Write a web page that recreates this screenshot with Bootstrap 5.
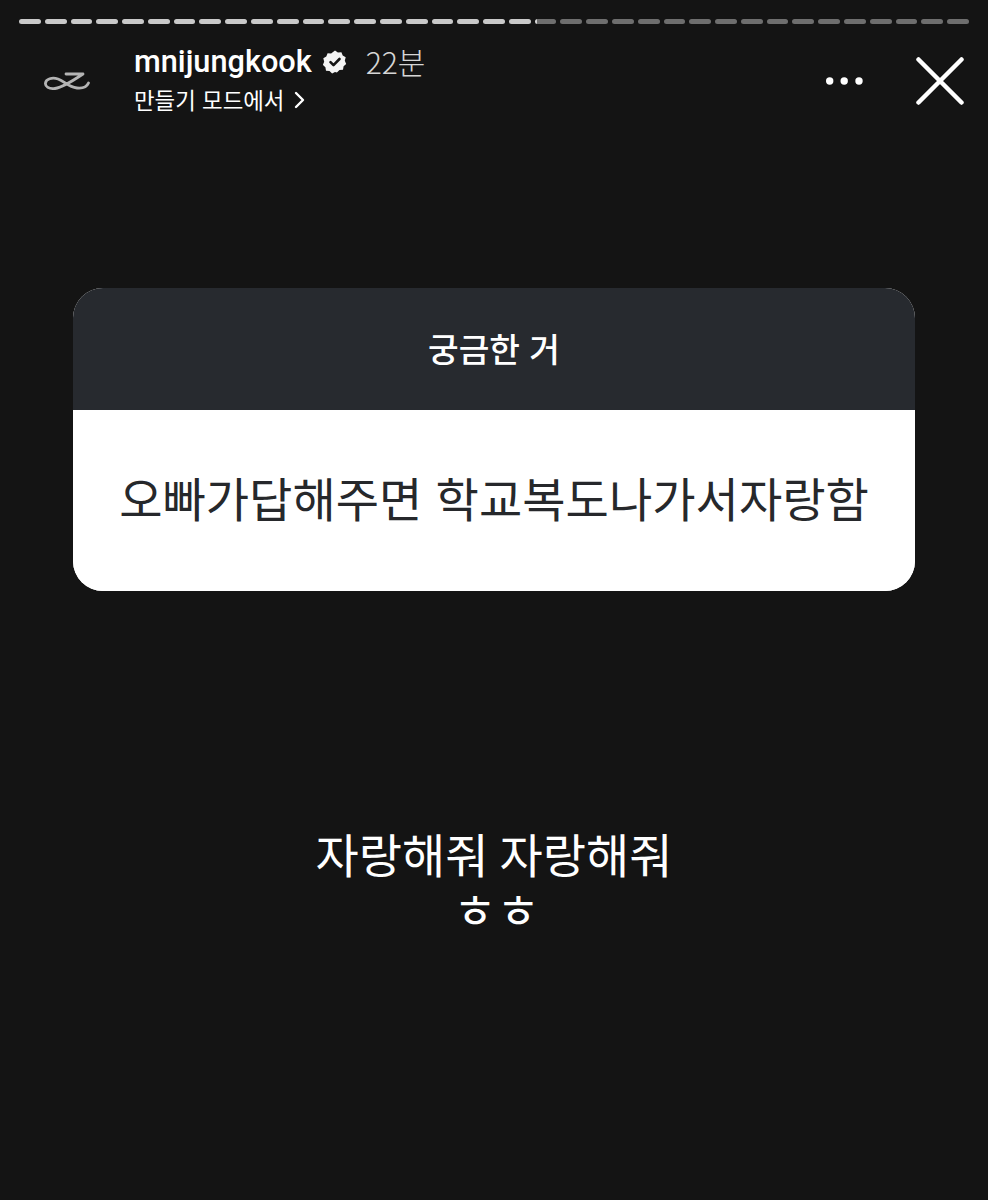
<!DOCTYPE html>
<html lang="ko">
<head>
    <meta charset="UTF-8">
    <meta name="viewport" content="width=device-width, initial-scale=1.0">
    <title>mnijungkook</title>
    <link href="https://cdn.jsdelivr.net/npm/bootstrap@5.3.0/dist/css/bootstrap.min.css" rel="stylesheet">
    <style>
        body {
            background-color: #141414;
            font-family: "Noto Sans CJK KR", "Noto Sans", sans-serif;
            color: #fff;
            min-height: 1200px;
        }
        .story-progress {
            padding: 19px 19px 0;
            gap: 4px;
        }
        .seg {
            flex: 1 1 0;
            height: 5px;
            border-radius: 3px;
            background-color: #6e6e6e;
        }
        .seg-done { background-color: #c9c9c9; }
        .seg-part { background: linear-gradient(to right, #d8d8d8 2px, #6e6e6e 2px); }
        .story-head {
            padding: 6px 24px 0 44px;
            height: 107px;
        }
        .avatar-mark { width: 46px; margin-right: 44px; margin-top: 1px; }
        .user-name {
            font-family: Roboto, "Liberation Sans", sans-serif;
            font-weight: 500;
            font-size: 30.700px;
            line-height: 38px;
        }
        .post-age {
            font-family: "Noto Sans CJK KR", sans-serif;
            font-weight: 300;
            font-size: 30px;
            line-height: 38px;
            color: #d6d6d6;
            margin-left: 19px;
            margin-top: -3px;
        }
        .verified-badge { margin-left: 11px; }
        .sub-line {
            font-size: 22.400px;
            line-height: 37px;
        }
        .sub-arrow { margin-left: 10px; }
        .more-dots { margin-right: 53px; margin-top: 1px; }
        .qa-card {
            margin: 157px 73px 0;
            border: 0;
            border-radius: 30px;
            overflow: hidden;
            height: 303px;
        }
        .qa-top {
            height: 122px;
            background-color: #272a2f;
            color: #fff;
            font-size: 33.300px;
            font-weight: 500;
            border: 0;
            border-radius: 0 !important;
            padding-bottom: 10px;
        }
        .qa-bottom {
            background-color: #fff;
            color: #26282b;
            font-size: 47.100px;
            padding-bottom: 6px !important;
        }
        .reply-text {
            margin-top: 227px;
            font-weight: 400;
            font-size: 47px;
            word-spacing: -2px;
            line-height: 69px;
        }
        .reply-small {
            font-weight: 400;
            font-size: 47px;
            word-spacing: -13px;
            line-height: 42px;
            padding-left: 5px;
        }
    </style>
</head>
<body>
    <!-- progress bar -->
    <div class="story-progress d-flex">
        <div class="seg seg-done"></div><div class="seg seg-done"></div><div class="seg seg-done"></div><div class="seg seg-done"></div>
        <div class="seg seg-done"></div><div class="seg seg-done"></div><div class="seg seg-done"></div><div class="seg seg-done"></div>
        <div class="seg seg-done"></div><div class="seg seg-done"></div><div class="seg seg-done"></div><div class="seg seg-done"></div>
        <div class="seg seg-done"></div><div class="seg seg-done"></div><div class="seg seg-done"></div><div class="seg seg-done"></div>
        <div class="seg seg-done"></div><div class="seg seg-done"></div><div class="seg seg-done"></div><div class="seg seg-done"></div>
        <div class="seg seg-part"></div>
        <div class="seg"></div><div class="seg"></div><div class="seg"></div><div class="seg"></div>
        <div class="seg"></div><div class="seg"></div><div class="seg"></div><div class="seg"></div>
        <div class="seg"></div><div class="seg"></div><div class="seg"></div><div class="seg"></div>
        <div class="seg"></div><div class="seg"></div><div class="seg"></div><div class="seg"></div>
    </div>

    <!-- header -->
    <div class="story-head d-flex align-items-center">
        <svg class="avatar-mark flex-shrink-0" width="46" height="20" viewBox="0 0 46 20" fill="none" stroke="#b4b4b4" stroke-width="2.800" stroke-linecap="round" stroke-linejoin="round">
            <path d="M22 3H39C33 7 20 16 11 17.500C5 18.500 1 15.500 1.500 12C2 8 8 6 14 8C21 10.500 24 16 33 17C39 17.600 43 15.500 44.500 12"/>
        </svg>
        <div class="flex-grow-1">
            <div class="d-flex align-items-center">
                <span class="user-name">mnijungkook</span>
                <svg class="verified-badge" width="24" height="24" viewBox="0 0 24 24">
                    <path fill="#f4f4f4" d="M12 .5l2.900 2 3.500-.3 1.300 3.300 3 1.800-.9 3.400 1.400 3.200-2.600 2.300-.6 3.500-3.500.4-2.600 2.400L12 22l-2.900 1.500-2.600-2.400-3.500-.4-.6-3.500L-.2 14.900l1.400-3.200-.9-3.400 3-1.800 1.300-3.300 3.500.3z"/>
                    <path fill="none" stroke="#141414" stroke-width="2.600" stroke-linecap="round" stroke-linejoin="round" d="M7.500 12.200l3 3 6-6.200"/>
                </svg>
                <span class="post-age">22분</span>
            </div>
            <div class="sub-line d-flex align-items-center">
                만들기 모드에서
                <svg class="sub-arrow" width="11" height="18" viewBox="0 0 11 18" fill="none" stroke="#fff" stroke-width="2.400" stroke-linecap="round" stroke-linejoin="round">
                    <path d="M2 2l7 7-7 7"/>
                </svg>
            </div>
        </div>
        <svg class="more-dots" width="37" height="8" viewBox="0 0 37 8" fill="#fff">
            <circle cx="3.700" cy="4" r="3.700"/><circle cx="18.200" cy="4" r="3.700"/><circle cx="33" cy="4" r="3.700"/>
        </svg>
        <svg width="48" height="48" viewBox="0 0 48 48" fill="none" stroke="#fff" stroke-width="4.500" stroke-linecap="round">
            <path d="M2.500 2.500l43 43M45.500 2.500l-43 43"/>
        </svg>
    </div>

    <!-- question card -->
    <div class="card qa-card">
        <div class="card-header qa-top d-flex align-items-center justify-content-center">궁금한 거</div>
        <div class="card-body qa-bottom d-flex align-items-center justify-content-center p-0">오빠가답해주면 학교복도나가서자랑함</div>
    </div>

    <!-- reply -->
    <div class="reply-text text-center">자랑해줘 자랑해줘</div>
    <div class="reply-small text-center">ㅎ ㅎ</div>

    <script src="https://cdn.jsdelivr.net/npm/bootstrap@5.3.0/dist/js/bootstrap.bundle.min.js"></script>
</body>
</html>
